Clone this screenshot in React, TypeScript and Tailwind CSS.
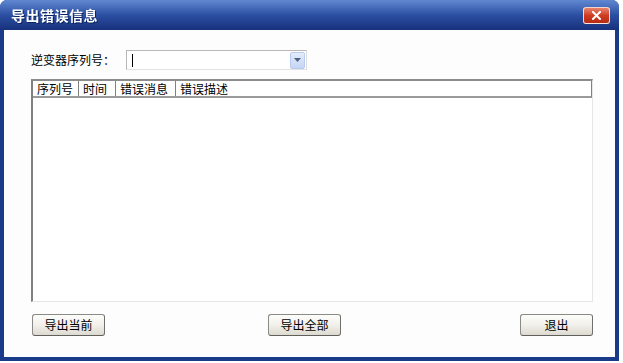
const font = "font-['SimSun','Noto_Sans_CJK_SC',sans-serif]";

function XpButton({ label, className = "" }: { label: string; className?: string }) {
  return (
    <button
      type="button"
      className={`h-[22px] w-[73px] rounded-[3px] border border-[#8a8a86] border-r-[#6f6f6b] border-b-[#5f5f5b] bg-gradient-to-b from-[#fdfdfb] via-[#f1f0ea] to-[#dcdad0] text-[12px] leading-none text-black ${className}`}
    >
      {label}
    </button>
  );
}

export default function App() {
  const columns = [
    { name: "序列号", w: "w-[46px]" },
    { name: "时间", w: "w-[37px]" },
    { name: "错误消息", w: "w-[60px]" },
    { name: "错误描述", w: "flex-1" },
  ];

  return (
    <div className={`w-[623px] h-[363px] bg-white ${font}`}>
      <div className="w-[619px] h-[361px] flex flex-col rounded-t-[7px] overflow-hidden bg-[#1a3a8a]">
        {/* title bar */}
        <div className="h-[30px] shrink-0 flex items-center justify-between pl-[11px] pr-[9px] bg-gradient-to-b from-[#6189d2] via-[#2c4fa2] to-[#17317c]">
          <span className="text-[14px] font-bold text-white tracking-[0.5px] drop-shadow-[1px_1px_0_#0a2460]">
            导出错误信息
          </span>
          <div className="w-[27px] h-[17px] rounded-[3px] border border-white/80 bg-gradient-to-b from-[#e8826a] via-[#cf3b20] to-[#b72c14] flex items-center justify-center">
            <svg width="9" height="9" viewBox="0 0 9 9">
              <path d="M1 1 L8 8 M8 1 L1 8" stroke="white" strokeWidth="2" strokeLinecap="square" />
            </svg>
          </div>
        </div>

        {/* body */}
        <div className="flex-1 mx-[4px] mb-[4px] bg-[#fdfdfd] flex flex-col pt-[20px] pl-[27px] pr-[22px]">
          <div className="h-[20px] flex items-center">
            <span className="w-[95px] text-[12px] text-black">逆变器序列号：</span>
            <div className="h-[20px] w-[181px] border border-[#b8b8b8] border-r-[#dcdcdc] border-b-[#e2e2e2] bg-white flex items-center">
              <span className="ml-[5px] h-[13px] w-px bg-black" />
              <div className="ml-auto mr-[1px] h-[17px] w-[15px] rounded-[2px] border border-[#b9cbef] bg-gradient-to-b from-[#e4ecfc] to-[#c5d5f5] flex items-center justify-center">
                <svg width="7" height="4" viewBox="0 0 7 4">
                  <path d="M0 0 H7 L3.5 4 Z" fill="#4d6185" />
                </svg>
              </div>
            </div>
          </div>

          <div className="mt-[9px] h-[223px] w-[562px] border-l-[2px] border-t-[2px] border-l-[#808080] border-t-[#8c8c8c] border-r border-b border-r-[#e6e6e6] border-b-[#e6e6e6] bg-white flex flex-col">
            <div className="h-[17px] flex border-b-[2px] border-[#9a9a9a] border-r border-r-[#808080]">
              {columns.map((c) => (
                <div
                  key={c.name}
                  className={`${c.w} h-full border-r border-[#808080] last:border-r-0 pl-[4px] text-[12px] leading-[15px] text-black`}
                >
                  {c.name}
                </div>
              ))}
            </div>
          </div>

          <div className="mt-[12px] flex">
            <XpButton label="导出当前" className="ml-[1px]" />
            <XpButton label="导出全部" className="ml-[163px]" />
            <XpButton label="退出" className="ml-auto" />
          </div>
        </div>
      </div>
    </div>
  );
}
